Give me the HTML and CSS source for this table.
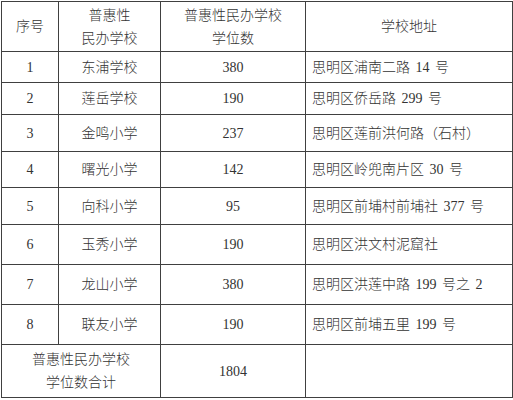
FILE: index.html
```html
<!DOCTYPE html>
<html lang="zh-CN">
<head>
<meta charset="utf-8">
<title>普惠性民办学校学位数</title>
<link rel="stylesheet" href="styles.css">
</head>
<body>
<table class="schools">
  <colgroup>
    <col class="c-no">
    <col class="c-name">
    <col class="c-seats">
    <col class="c-addr">
  </colgroup>
  <thead>
    <tr class="r-head">
      <th>序号</th>
      <th>普惠性<br>民办学校</th>
      <th>普惠性民办学校<br>学位数</th>
      <th>学校地址</th>
    </tr>
  </thead>
  <tbody>
    <tr class="r-a"><td>1</td><td>东浦学校</td><td>380</td><td class="addr">思明区浦南二路 14 号</td></tr>
    <tr class="r-b"><td>2</td><td>莲岳学校</td><td>190</td><td class="addr">思明区侨岳路 299 号</td></tr>
    <tr class="r-c"><td>3</td><td>金鸣小学</td><td>237</td><td class="addr">思明区莲前洪何路（石村）</td></tr>
    <tr class="r-d"><td>4</td><td>曙光小学</td><td>142</td><td class="addr">思明区岭兜南片区 30 号</td></tr>
    <tr class="r-c"><td>5</td><td>向科小学</td><td>95</td><td class="addr">思明区前埔村前埔社 377 号</td></tr>
    <tr class="r-e"><td>6</td><td>玉秀小学</td><td>190</td><td class="addr">思明区洪文村泥窟社</td></tr>
    <tr class="r-e"><td>7</td><td>龙山小学</td><td>380</td><td class="addr">思明区洪莲中路 199 号之 2</td></tr>
    <tr class="r-e"><td>8</td><td>联友小学</td><td>190</td><td class="addr">思明区前埔五里 199 号</td></tr>
    <tr class="r-total"><td colspan="2" class="total-label">普惠性民办学校<br>学位数合计</td><td>1804</td><td class="addr"></td></tr>
  </tbody>
</table>
</body>
</html>
```

FILE: styles.css
```css
html, body {
  margin: 0;
  padding: 0;
  background: #ffffff;
}

body {
  padding: 1px 0 0 1px;
  font-family: "Liberation Serif", "Noto Sans CJK SC", sans-serif;
  font-size: 14px;
  font-weight: 300;
  color: #333333;
}

.schools {
  border-collapse: collapse;
  table-layout: fixed;
  width: 511px;
}

.c-no { width: 57px; }
.c-name { width: 102px; }
.c-seats { width: 145px; }
.c-addr { width: 207px; }

.schools th,
.schools td {
  border: 1px solid #404040;
  padding: 0;
  text-align: center;
  vertical-align: middle;
  font-weight: 300;
  line-height: 23px;
}

.schools td.addr {
  text-align: left;
  padding-left: 6px;
  white-space: nowrap;
  word-spacing: 2px;
}

.r-head { height: 50px; }
.r-a { height: 31px; }
.r-b { height: 32px; }
.r-c { height: 37px; }
.r-d { height: 36px; }
.r-e { height: 40px; }
.r-total { height: 53px; }

.total-label {
  line-height: 21px;
}
```
